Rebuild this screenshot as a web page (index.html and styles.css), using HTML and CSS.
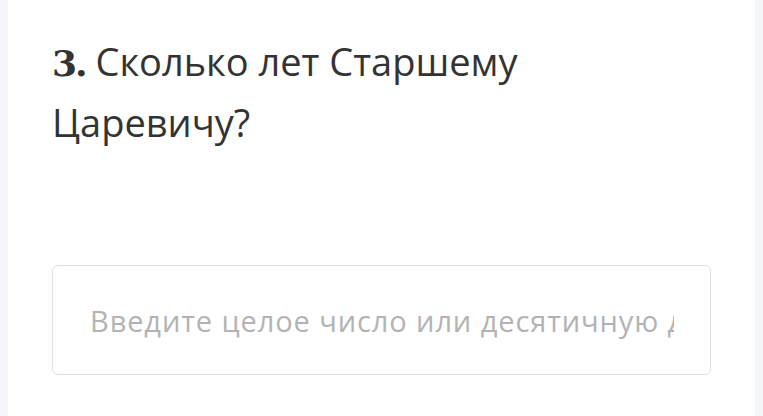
FILE: index.html
```html
<!DOCTYPE html>
<html lang="ru">

<head>
    <meta charset="UTF-8">
    <meta name="viewport" content="width=device-width, initial-scale=1.0">
    <title>Викторина</title>
    <link rel="stylesheet" href="styles.css">
</head>

<body>
    <div class="quiz-card">
        <h2 class="question-title">
            <span class="question-num">3.</span> Сколько лет Старшему Царевичу?
        </h2>
        <div class="answer-field">
            <input type="text" class="answer-input" placeholder="Введите целое число или десятичную дробь"
                aria-label="Ответ">
        </div>
    </div>
</body>

</html>
```

FILE: styles.css
```css
body {
    margin: 0;
    padding: 0 8px;
    background-color: #f4f6f9;
    font-family: 'Open Sans', 'Noto Sans', sans-serif;
    color: #333;
    height: 100vh;
    box-sizing: border-box;
}

.quiz-card {
    background: #fff;
    height: 100%;
    padding: 32px 44px 0;
    box-sizing: border-box;
}

.question-title {
    margin: 0;
    width: 520px;
    font-size: 38px;
    font-weight: normal;
    line-height: 59px;
    color: #333;
}

.question-num {
    font-family: 'DejaVu Serif', serif;
    font-weight: bold;
    font-size: 36px;
    letter-spacing: -2px;
}

.answer-field {
    margin-top: 113px;
}

.answer-input {
    display: block;
    width: 100%;
    height: 110px;
    box-sizing: border-box;
    padding: 0 36px 0 37px;
    border: 1px solid #e0e0e0;
    border-radius: 6px;
    font-family: 'Open Sans', 'Noto Sans', sans-serif;
    font-size: 29px;
    letter-spacing: 0.9px;
    color: #333;
    outline: none;
}

.answer-input::placeholder {
    color: #b3b3b3;
}
```
